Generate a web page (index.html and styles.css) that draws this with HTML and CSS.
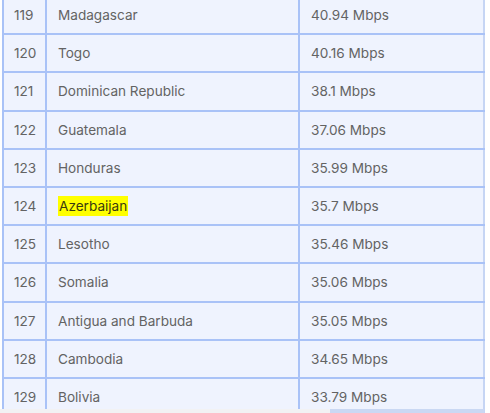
FILE: index.html
```html
<!DOCTYPE html>
<html>
<head>
<meta charset="utf-8">
<link rel="stylesheet" href="styles.css">
</head>
<body>
<div class="viewport">
  <table class="speeds">
    <tbody>
      <tr><td class="rank">119</td><td class="country">Madagascar</td><td class="speed">40.94 Mbps</td></tr>
      <tr><td class="rank">120</td><td class="country">Togo</td><td class="speed">40.16 Mbps</td></tr>
      <tr><td class="rank">121</td><td class="country">Dominican Republic</td><td class="speed">38.1 Mbps</td></tr>
      <tr><td class="rank">122</td><td class="country">Guatemala</td><td class="speed">37.06 Mbps</td></tr>
      <tr><td class="rank">123</td><td class="country">Honduras</td><td class="speed">35.99 Mbps</td></tr>
      <tr><td class="rank">124</td><td class="country"><span class="mark">Azerbaijan</span></td><td class="speed">35.7 Mbps</td></tr>
      <tr><td class="rank">125</td><td class="country">Lesotho</td><td class="speed">35.46 Mbps</td></tr>
      <tr><td class="rank">126</td><td class="country">Somalia</td><td class="speed">35.06 Mbps</td></tr>
      <tr><td class="rank">127</td><td class="country">Antigua and Barbuda</td><td class="speed">35.05 Mbps</td></tr>
      <tr><td class="rank">128</td><td class="country">Cambodia</td><td class="speed">34.65 Mbps</td></tr>
      <tr><td class="rank">129</td><td class="country">Bolivia</td><td class="speed">33.79 Mbps</td></tr>
    </tbody>
  </table>
  <div class="bottom-strip"><div class="strip-left"></div><div class="strip-right"></div></div>
</div>
</body>
</html>
```
FILE: styles.css
```css
html, body {
  margin: 0;
  padding: 0;
  background: #ffffff;
}
.viewport {
  width: 490px;
  height: 413px;
  overflow: hidden;
  position: relative;
}
.speeds {
  margin: -5px 0 0 2px;
  border-collapse: collapse;
  width: 483px;
  table-layout: fixed;
  background: #eff3fe;
  font-family: Inter, "Noto Sans", sans-serif;
  font-size: 13.6px;
  color: #636363;
  border-right: 2px solid #c6d5f4;
}
.speeds td {
  border: 2px solid #a9c2f7;
  height: 38.2px;
  padding: 0 0 0 10px;
  box-sizing: border-box;
  vertical-align: middle;
  white-space: nowrap;
}
.speeds td.rank { width: 43px; }
.speeds td.country { width: 253px; padding-left: 11px; }
.speeds td.speed { padding-left: 11px; border-right: 2px solid #c6d5f4; }
.mark {
  background: #ffff00;
  color: #3a3a10;
  padding: 2px 1px;
}
.bottom-strip {
  position: absolute;
  left: 0;
  bottom: 0;
  width: 490px;
  height: 4px;
  display: flex;
}
.strip-left { width: 330px; background: #f2f2f4; }
.strip-right { width: 154px; background: #cad8f3; }
```
